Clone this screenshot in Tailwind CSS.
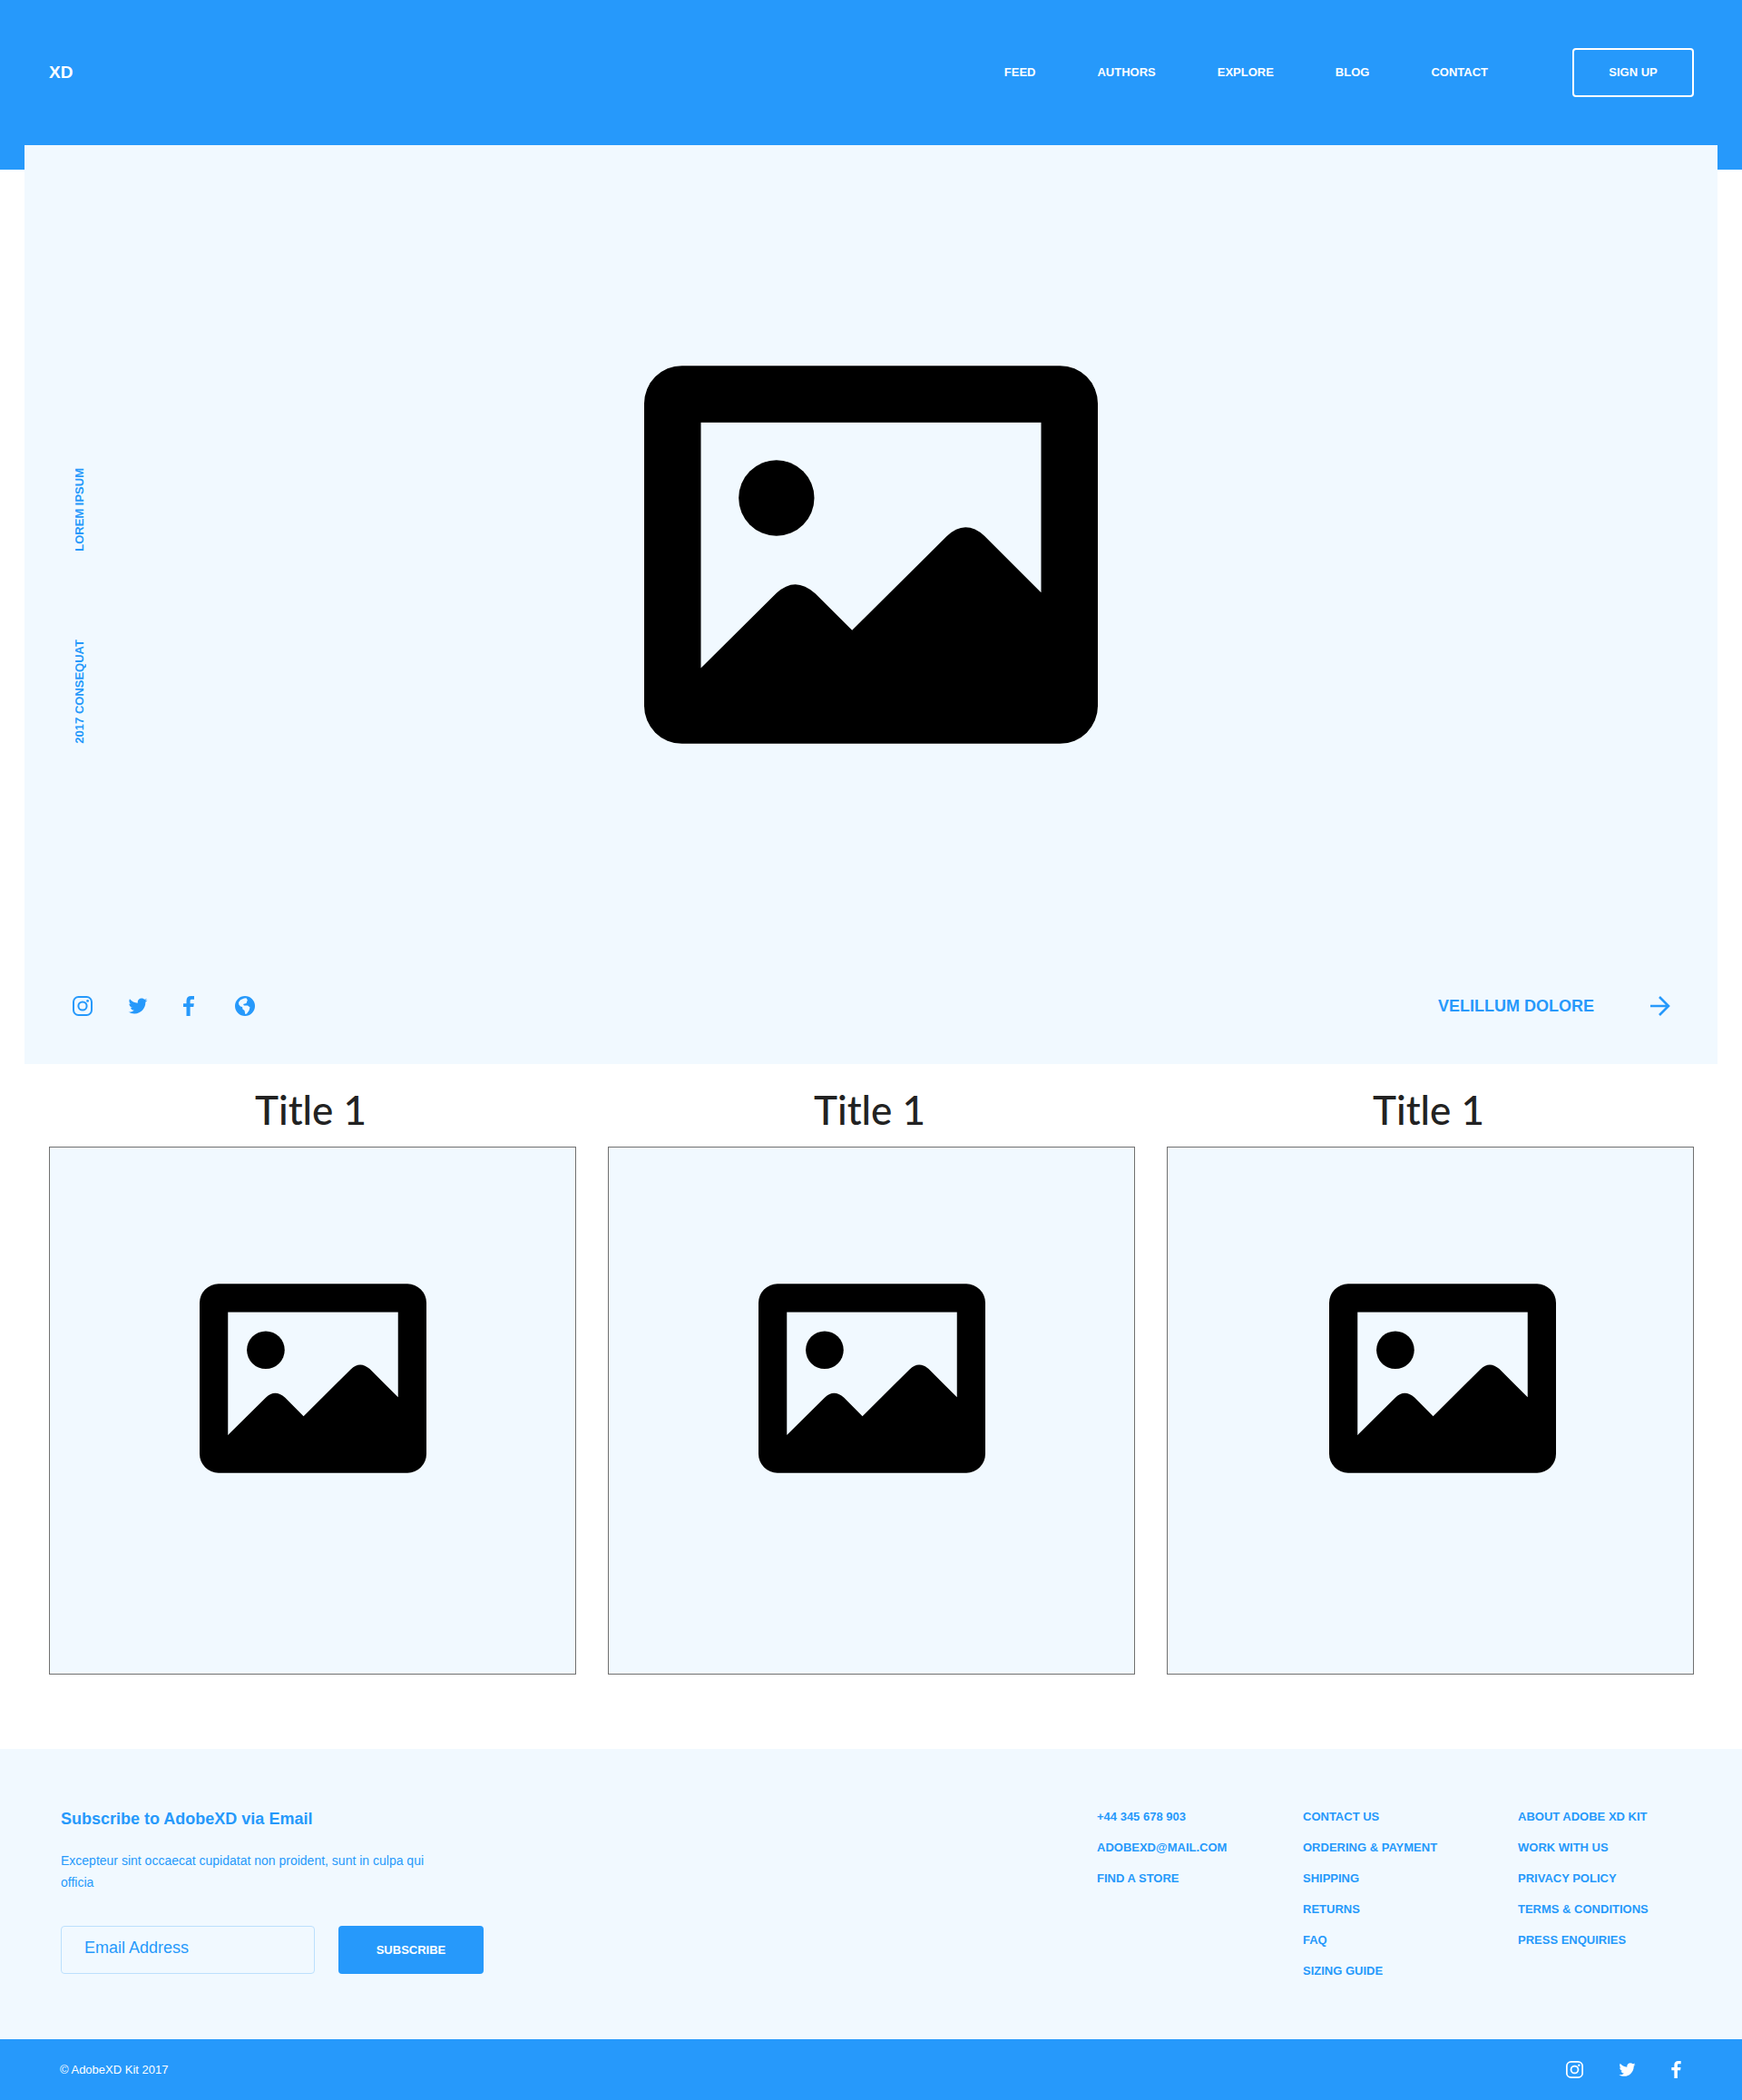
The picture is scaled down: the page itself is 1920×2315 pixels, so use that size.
<!DOCTYPE html>
<html lang="en">
<head>
<meta charset="utf-8">
<meta name="viewport" content="width=device-width, initial-scale=1">
<title>XD</title>
<script src="https://cdn.jsdelivr.net/npm/@tailwindcss/browser@4"></script>
</head>
<body class="bg-white font-['Liberation_Sans',Arial,sans-serif] text-[#2699fb]">

<!-- Shared icon shapes -->
<svg class="hidden" aria-hidden="true">
  <symbol id="picture" viewBox="0 0 24 20">
    <path fill-rule="evenodd" d="M2 0H22A2 2 0 0 1 24 2V18A2 2 0 0 1 22 20H2A2 2 0 0 1 0 18V2A2 2 0 0 1 2 0ZM3 3V16L7 12.03Q7.5 11.57 8 11.57T9.05 12.05L11 14L16 9.03Q16.5 8.55 17 8.55T18 9L21 12V3Z"/>
    <circle cx="7" cy="7" r="2"/>
  </symbol>
  <symbol id="instagram" viewBox="0 0 22 22">
    <rect x="1" y="1" width="20" height="20" rx="5.5" fill="none" stroke="currentColor" stroke-width="2"/>
    <circle cx="11" cy="11" r="4.6" fill="none" stroke="currentColor" stroke-width="2"/>
    <circle cx="16.6" cy="5.4" r="1.4" fill="currentColor"/>
  </symbol>
  <symbol id="twitter" viewBox="1 1.5 22 22">
    <path fill="currentColor" d="M22.46 6c-.77.35-1.6.58-2.46.69.88-.53 1.56-1.37 1.88-2.38-.83.5-1.75.85-2.72 1.05C18.37 4.5 17.26 4 16 4c-2.35 0-4.27 1.92-4.27 4.29 0 .34.04.67.11.98C8.28 9.09 5.11 7.38 3 4.79c-.37.63-.58 1.37-.58 2.15 0 1.49.75 2.81 1.91 3.56-.71 0-1.37-.2-1.95-.5v.03c0 2.08 1.48 3.82 3.44 4.21a4.22 4.22 0 0 1-1.93.07 4.28 4.28 0 0 0 4 2.98 8.521 8.521 0 0 1-5.33 1.84c-.34 0-.68-.02-1.02-.06C3.44 20.29 5.7 21 8.12 21 16 21 20.33 14.46 20.33 8.79c0-.19 0-.37-.01-.56.84-.6 1.56-1.36 2.14-2.23z"/>
  </symbol>
  <symbol id="facebook" viewBox="0 0 12 22">
    <path fill="currentColor" d="M3.5 22V12H0V8.2H3.5V5.3C3.5 1.8 5.3 0 8.6 0H12V3.8H9.6C8.1 3.8 7.6 4.3 7.6 5.6V8.2H11.8L11.3 12H7.6V22Z"/>
  </symbol>
  <symbol id="globe" viewBox="0 0 22 22">
    <path fill="currentColor" fill-rule="evenodd" d="M11 0A11 11 0 1 1 11 22A11 11 0 0 1 11 0ZM12.5 2.3L10 2.6L6 4.3L4 7L4.3 9.5L6 11.5L8 12L8.5 14.5L10.5 16L11.3 20L13 19.6L15.5 16L16.5 12.5L14 10.5L10 10.6L9 9L12.5 8L13.8 4.5Z"/>
  </symbol>
  <symbol id="arrow" viewBox="0 0 22 22">
    <path fill="none" stroke="currentColor" stroke-width="2.6" d="M0 11H20M10 1L20 11L10 21"/>
  </symbol>
</svg>

<header class="bg-[#2699fb] text-white pt-[53px] pb-20 pl-[54px] pr-[53px] h-[187px]">
  <div class="flex items-center justify-between h-[54px]">
    <a href="#" class="text-[19px] font-bold">XD</a>
    <div class="flex items-center gap-[93px]">
      <nav class="flex gap-[68px] text-[13px] font-bold">
        <a href="#">FEED</a>
        <a href="#">AUTHORS</a>
        <a href="#">EXPLORE</a>
        <a href="#">BLOG</a>
        <a href="#">CONTACT</a>
      </nav>
      <button type="button" class="w-[134px] h-[54px] border-2 border-white rounded text-[13px] font-bold">SIGN UP</button>
    </div>
  </div>
</header>

<main>
  <section class="-mt-[27px] mx-[27px] bg-[#f1f9ff] h-[1013px] flex flex-col">
    <div class="grid grid-cols-[1fr_auto_1fr] items-end pt-[243px]">
      <div class="pl-[51px] flex flex-col items-start gap-[98px] text-[13px] leading-5 font-bold">
        <span class="[writing-mode:vertical-rl] rotate-180">LOREM IPSUM</span>
        <span class="[writing-mode:vertical-rl] rotate-180">2017 CONSEQUAT</span>
      </div>
      <svg class="w-[500px] h-[417px] text-black" role="img" aria-label="Image placeholder"><use href="#picture"/></svg>
    </div>
    <div class="mt-auto mb-[53px] pl-[53px] pr-[52px] flex items-center justify-between">
      <div class="flex items-center gap-[39px]">
        <a href="#" aria-label="Instagram"><svg class="size-[22px]"><use href="#instagram"/></svg></a>
        <a href="#" aria-label="Twitter"><svg class="size-[22px]"><use href="#twitter"/></svg></a>
        <a href="#" aria-label="Facebook"><svg class="w-3 h-[22px]"><use href="#facebook"/></svg></a>
        <a href="#" aria-label="Website" class="pl-[6px]"><svg class="size-[22px]"><use href="#globe"/></svg></a>
      </div>
      <a href="#" class="flex items-center gap-[62px] text-lg leading-[22px] font-bold">VELILLUM DOLORE
        <svg class="size-[22px]"><use href="#arrow"/></svg>
      </a>
    </div>
  </section>

  <section class="pl-[54px] pr-[53px] pb-[82px] grid grid-cols-3 gap-[35px]">
    <article>
      <h2 class="h-[91px] pt-5 pr-1 text-center font-[Lato,sans-serif] font-medium text-[44px] leading-[60px] text-[#222]">Title 1</h2>
      <div class="h-[582px] border border-[#707070] bg-[#f1f9ff] pt-[150px] flex justify-center">
        <svg class="w-[250px] h-[209px] text-black" role="img" aria-label="Image placeholder"><use href="#picture"/></svg>
      </div>
    </article>
    <article>
      <h2 class="h-[91px] pt-5 pr-1 text-center font-[Lato,sans-serif] font-medium text-[44px] leading-[60px] text-[#222]">Title 1</h2>
      <div class="h-[582px] border border-[#707070] bg-[#f1f9ff] pt-[150px] flex justify-center">
        <svg class="w-[250px] h-[209px] text-black" role="img" aria-label="Image placeholder"><use href="#picture"/></svg>
      </div>
    </article>
    <article>
      <h2 class="h-[91px] pt-5 pr-1 text-center font-[Lato,sans-serif] font-medium text-[44px] leading-[60px] text-[#222]">Title 1</h2>
      <div class="h-[582px] border border-[#707070] bg-[#f1f9ff] pt-[150px] pl-[26px] flex justify-center">
        <svg class="w-[250px] h-[209px] text-black" role="img" aria-label="Image placeholder"><use href="#picture"/></svg>
      </div>
    </article>
  </section>
</main>

<footer>
  <div class="bg-[#f1f9ff] min-h-[320px] pt-16 pb-16 pl-[67px] pr-[103px] flex justify-between">
    <form class="w-[466px]">
      <h2 class="text-lg leading-[26px] font-bold">Subscribe to AdobeXD via Email</h2>
      <p class="mt-[21px] w-[410px] text-sm leading-6">Excepteur sint occaecat cupidatat non proident, sunt in culpa qui officia</p>
      <div class="mt-9 flex gap-[26px]">
        <input type="email" aria-label="Email Address" placeholder="Email Address" class="w-[280px] h-[53px] rounded border border-[#bce0fd] px-[25px] pb-[5px] text-lg placeholder:text-[#2699fb]">
        <button type="submit" class="w-40 h-[53px] rounded bg-[#2699fb] text-white text-[13px] font-bold">SUBSCRIBE</button>
      </div>
    </form>
    <nav class="grid grid-cols-[227px_237px_144px] text-[13px] leading-[22px] font-bold whitespace-nowrap">
      <ul class="flex flex-col gap-3">
        <li><a href="#">+44 345 678 903</a></li>
        <li><a href="#">ADOBEXD@MAIL.COM</a></li>
        <li><a href="#">FIND A STORE</a></li>
      </ul>
      <ul class="flex flex-col gap-3">
        <li><a href="#">CONTACT US</a></li>
        <li><a href="#">ORDERING &amp; PAYMENT</a></li>
        <li><a href="#">SHIPPING</a></li>
        <li><a href="#">RETURNS</a></li>
        <li><a href="#">FAQ</a></li>
        <li><a href="#">SIZING GUIDE</a></li>
      </ul>
      <ul class="flex flex-col gap-3">
        <li><a href="#">ABOUT ADOBE XD KIT</a></li>
        <li><a href="#">WORK WITH US</a></li>
        <li><a href="#">PRIVACY POLICY</a></li>
        <li><a href="#">TERMS &amp; CONDITIONS</a></li>
        <li><a href="#">PRESS ENQUIRIES</a></li>
      </ul>
    </nav>
  </div>
  <div class="bg-[#2699fb] text-white h-[67px] pl-[66px] pr-[67px] flex items-center justify-between text-[13px]">
    <p>© AdobeXD Kit 2017</p>
    <div class="flex items-center gap-[39px]">
      <a href="#" aria-label="Instagram"><svg class="size-[19px]"><use href="#instagram"/></svg></a>
      <a href="#" aria-label="Twitter"><svg class="size-[19px]"><use href="#twitter"/></svg></a>
      <a href="#" aria-label="Facebook"><svg class="w-[11px] h-[19px]"><use href="#facebook"/></svg></a>
    </div>
  </div>
</footer>
</body>
</html>
